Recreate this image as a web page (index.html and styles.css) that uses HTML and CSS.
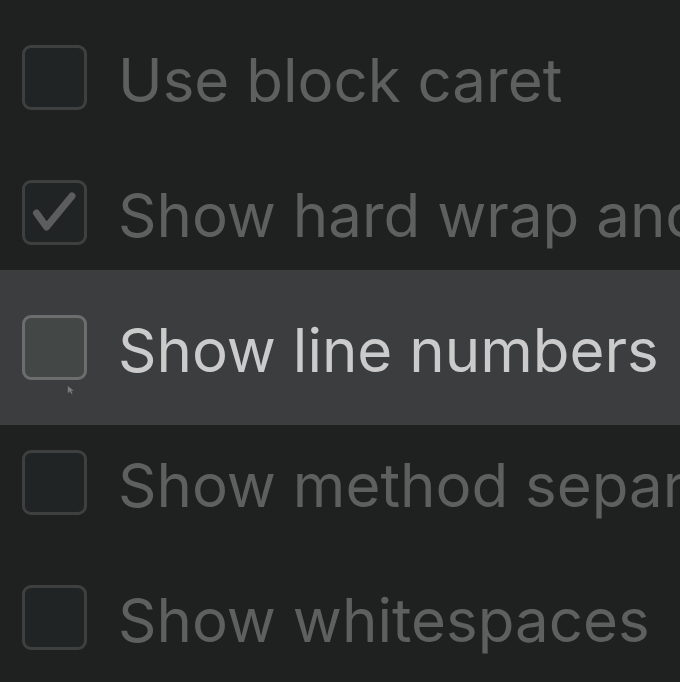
FILE: index.html
```html
<!DOCTYPE html>
<html>
<head>
<meta charset="utf-8">
<link rel="stylesheet" href="styles.css">
</head>
<body>
<div class="list">
  <div class="row">
    <span class="box"></span>
    <span class="label">Use block caret</span>
  </div>
  <div class="row">
    <span class="box">
      <svg class="check" viewBox="0 0 65 65" width="65" height="65"><path d="M14.5 33 L24.5 47 L50 16" fill="none" stroke="#5c5e5e" stroke-width="7" stroke-linecap="round" stroke-linejoin="round"/></svg>
    </span>
    <span class="label">Show hard wrap and visual guides</span>
  </div>
  <div class="row active">
    <span class="box">
      <svg class="cursor" viewBox="0 0 10 12" width="8" height="10"><path d="M1 1 L1 10 L3.5 7.5 L5.5 11 L7 10.3 L5 7 L8.5 7 Z" fill="#7a7c7c"/></svg>
    </span>
    <span class="label">Show line numbers</span>
  </div>
  <div class="row">
    <span class="box"></span>
    <span class="label">Show method separators</span>
  </div>
  <div class="row">
    <span class="box"></span>
    <span class="label">Show whitespaces</span>
  </div>
</div>
</body>
</html>
```
FILE: styles.css
```css
html, body {
  margin: 0;
  padding: 0;
  background: #1f2020;
  overflow: hidden;
}
body {
  width: 680px;
  height: 682px;
  font-family: "Inter", "Liberation Sans", sans-serif;
}
.list {
  display: flex;
  flex-direction: column;
  padding-top: 10px;
}
.row {
  height: 135px;
  display: flex;
  align-items: center;
  padding-left: 22px;
  gap: 31px;
  white-space: nowrap;
  overflow: hidden;
  box-sizing: border-box;
}
.row.active {
  background: #3c3d3f;
  height: 155px;
  margin: -10px 0;
}
.box {
  position: relative;
  flex: none;
  width: 65px;
  height: 65px;
  box-sizing: border-box;
  border: 3px solid #3e4040;
  border-radius: 9px;
  background: #212424;
}
.active .box {
  border-color: #6c6e6d;
  background: #434745;
}
.check {
  position: absolute;
  left: -3px;
  top: -3px;
}
.cursor {
  position: absolute;
  left: 42px;
  top: 67px;
}
.label {
  font-size: 60px;
  color: #5e5f5f;
  padding-top: 4px;
}
.active .label {
  color: #cbcbcb;
}
```
